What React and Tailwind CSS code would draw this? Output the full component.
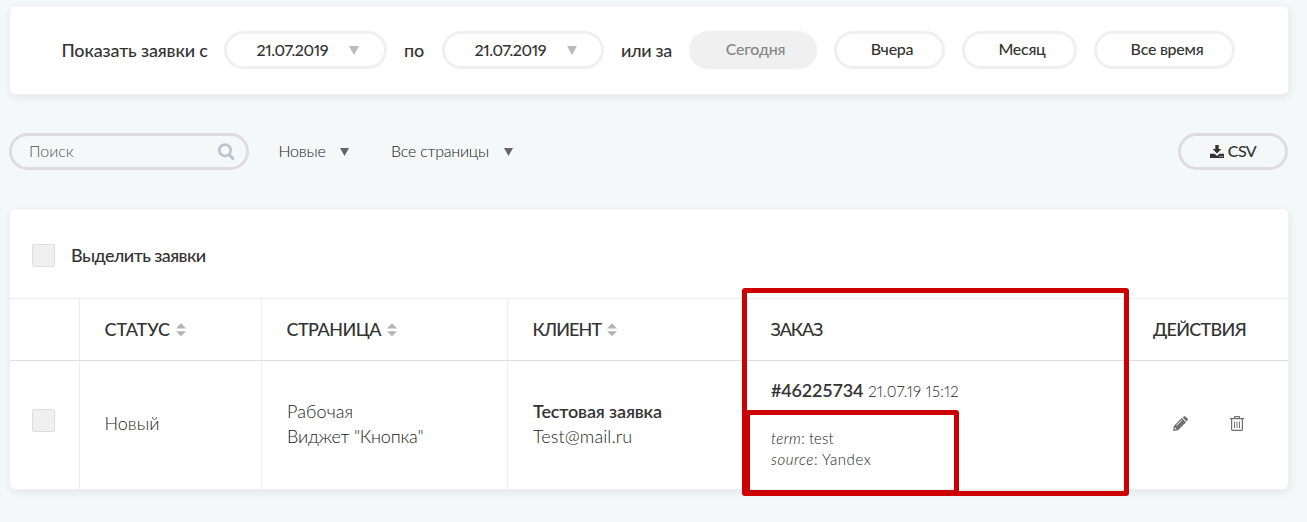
import React from "react";

function Triangle({ className }) {
  return (
    <svg viewBox="0 0 10 10" preserveAspectRatio="none" className={className} fill="currentColor">
      <path d="M0 0H10L5 10Z" />
    </svg>
  );
}

function SortIcon() {
  return (
    <svg width="10" height="14" viewBox="0 0 10 14" className="mt-0.5 shrink-0 text-[#b3b3b3]" fill="currentColor">
      <path d="M0 5.5L5 0.3L10 5.5Z" />
      <path d="M0 8.2H10L5 13.3Z" />
    </svg>
  );
}

function SearchIcon() {
  return (
    <svg width="17" height="18" viewBox="0 0 17 18" fill="none" stroke="#bcc3ce" strokeLinecap="round">
      <circle cx="7" cy="7.3" r="5.7" strokeWidth="2.6" />
      <path d="M11.4 11.9L14.8 15.4" strokeWidth="3" />
    </svg>
  );
}

function DownloadIcon() {
  return (
    <svg width="14" height="13" viewBox="0 0 14 13" fill="currentColor">
      <path d="M5.3 0H8.7V4H11.4L7 8.6L2.6 4H5.3Z" />
      <path fillRule="evenodd" d="M0 8.8H4.6L7 11L9.4 8.8H14V13H0ZM9.6 10.9v1h1v-1ZM11.8 10.9v1h1v-1Z" />
    </svg>
  );
}

function PencilIcon() {
  return (
    <svg width="15" height="15" viewBox="0 0 15 15" fill="#6f6f6f">
      <path fillRule="evenodd" d="M8.8 2L13 6.2L5 14.2L0 15L0.8 10ZM1.9 11.4L1.4 13.6L3.6 13.1ZM8.6 3.9L3.2 9.3L3.7 9.8L9.1 4.4Z" />
      <path d="M9.6 1.4L10.8 0.4Q11.6 -0.3 12.4 0.4L14.6 2.6Q15.2 3.4 14.6 4.2L13.6 5.4Z" />
    </svg>
  );
}

function TrashIcon() {
  return (
    <svg width="14" height="15" viewBox="0 0 14 15" fill="none" stroke="#707070" strokeWidth="1">
      <path d="M0 2.6H14M4.2 2.4L4.8 0.7H9.2L9.8 2.4" strokeWidth="1.3" />
      <path d="M1.6 3V13.6Q1.6 14.4 2.4 14.4H11.6Q12.4 14.4 12.4 13.6V3" strokeWidth="1.2" />
      <path d="M4.5 5.5V12M7 5.5V12M9.5 5.5V12" strokeWidth="1" />
    </svg>
  );
}

function DatePill({ width }) {
  return (
    <div className={`${width} flex h-[38px] items-center rounded-full border-3 border-[#f0f0f0] pl-[29.5px]`}>
      <span className="w-[92px] pb-px text-[16px] tracking-[-0.4px] [font-feature-settings:'pnum']">21.07.2019</span>
      <Triangle className="h-[9px] w-[10px] text-[#bbb]" />
    </div>
  );
}

function Pill({ children, className }) {
  return (
    <button className={`${className} flex h-[38px] items-center justify-center rounded-full border-3 border-[#f0f0f0] pb-0.5 text-[16px] tracking-[-0.25px]`}>
      {children}
    </button>
  );
}

function Checkbox() {
  return <div className="h-[23px] w-[23px] rounded-[2px] border border-[#ddd] bg-[#f0f0f0]" />;
}

const card = "rounded-[5px] bg-white shadow-[0_0_0_1px_#eff0f0,1px_3px_8px_1px_rgba(0,0,0,0.07)]";
const headCell = "flex items-center gap-[6px] pb-px";
const columns = "grid grid-cols-[70px_182px_246px_238px_382px_160px]";

export default function App() {
  return (
    <div className="h-[522px] overflow-hidden bg-[#f4f8f9] pr-[19px] pl-[10px] pt-[6px] font-['Lato','Noto_Sans',sans-serif] text-[#333]">
      <section className={`${card} flex h-[88px] items-center pl-[51.5px] text-[18px] font-medium`}>
        <span className="w-[162.5px] whitespace-nowrap tracking-[-0.15px]">Показать заявки с</span>
        <DatePill width="w-[163px]" />
        <span className="w-[55px] pl-[17px] tracking-[-0.2px]">по</span>
        <DatePill width="w-[162px]" />
        <span className="w-[85px] pl-[17px] whitespace-nowrap tracking-[-0.35px]">или за</span>
        <div className="flex gap-[17px]">
          <Pill className="w-[128px] bg-[#f0f0f0] pl-[5px] text-[#858585]">Сегодня</Pill>
          <Pill className="w-[111px] pl-[5px]">Вчера</Pill>
          <Pill className="w-[115px] pl-[5px]">Месяц</Pill>
          <Pill className="w-[141px] pl-[5px]">Все время</Pill>
        </div>
      </section>

      <div className="-ml-px mt-[39px] flex h-[37px] items-center text-[16px] font-light text-[#222]">
        <div className="flex h-[37px] w-[240px] items-center justify-between rounded-full border-3 border-[#ddd] pr-[11px] pl-[17px] text-[#555]">
          <span className="pb-0.5">Поиск</span>
          <SearchIcon />
        </div>
        <span className="ml-[29.5px] w-[61px] pb-px tracking-[-0.2px]">Новые</span>
        <Triangle className="h-[8px] w-[9px] text-[#666]" />
        <span className="ml-[42.5px] w-[113px] pb-px whitespace-nowrap tracking-[-0.22px]">Все страницы</span>
        <Triangle className="h-[8px] w-[9px] text-[#666]" />
        <button className="ml-auto flex h-[37px] w-[110px] items-center justify-center gap-[4px] rounded-full border-3 border-[#ddd] font-medium text-[#333]">
          <DownloadIcon />
          <span className="pb-0.5 tracking-[-0.5px]">CSV</span>
        </button>
      </div>

      <section className={`${card} relative mt-[39px] h-[280px] text-[18px]`}>
        <div className="flex h-[89px] items-center gap-[16px] border-b border-transparent pt-[5px] pl-[22px]">
          <Checkbox />
          <span className="pb-px font-medium tracking-[-0.58px]">Выделить заявки</span>
        </div>

        <div className={`${columns} h-[63px] border-t border-b border-t-[#eee] border-b-[#ddd] font-medium tracking-[-0.5px]`}>
          <div className="border-r border-[#eee]" />
          <div className={`${headCell} border-r border-[#eee] pl-[24.5px]`}><span className="tracking-[-0.1px]">СТАТУС</span><SortIcon /></div>
          <div className={`${headCell} border-r border-[#eee] pl-[24.5px]`}><span className="tracking-[-0.55px]">СТРАНИЦА</span><SortIcon /></div>
          <div className={`${headCell} pl-[24.5px]`}><span className="tracking-[-0.9px]">КЛИЕНТ</span><SortIcon /></div>
          <div className={`${headCell} pl-[24.5px]`}><span className="tracking-[-1.1px]">ЗАКАЗ</span></div>
          <div className={`${headCell} pl-[25px]`}><span className="tracking-[-0.7px]">ДЕЙСТВИЯ</span></div>
        </div>

        <div className={`${columns} h-[128px] font-light leading-[25px] text-[#1c1c1c]`}>
          <div className="border-r border-[#eee] pt-[48px] pl-[22px]"><Checkbox /></div>
          <div className="flex items-center border-r border-[#eee] pb-[3px] pl-[24.5px]">Новый</div>
          <div className="flex flex-col justify-center border-r border-[#eee] pb-0.5 pl-[25px] tracking-[-0.2px]">
            <span className="tracking-[0.1px]">Рабочая</span>
            <span>Виджет "Кнопка"</span>
          </div>
          <div className="flex flex-col justify-center pb-0.5 pl-[25px]">
            <span className="font-semibold tracking-[-0.15px] text-[#333]">Тестовая заявка</span>
            <span className="tracking-[0.1px]">Test@mail.ru</span>
          </div>
          <div className="pt-[17px] pl-[25px]">
            <div className="flex items-baseline gap-[5px]">
              <span className="font-semibold tracking-[-0.2px] text-[#333]">#46225734</span>
              <span className="text-[15px] tracking-[0.4px] [font-feature-settings:'pnum']">21.07.19 15:12</span>
            </div>
            <div className="mt-[24px] text-[15px] leading-[21px]">
              <div><i className="tracking-[0.4px]">term</i>: <span className="tracking-[0.1px]">test</span></div>
              <div className="tracking-[0.55px]"><i>source</i>: Yandex</div>
            </div>
          </div>
          <div className="flex items-center gap-[42px] pb-[3px] pl-[45px]">
            <PencilIcon />
            <TrashIcon />
          </div>
        </div>

        <div className="absolute top-[79px] left-[732px] h-[208px] w-[387px] rounded-[3px] border-5 border-[#c00]" />
        <div className="absolute top-[201px] left-[735px] h-[85px] w-[214px] rounded-[3px] border-5 border-[#c00]" />
      </section>
    </div>
  );
}
